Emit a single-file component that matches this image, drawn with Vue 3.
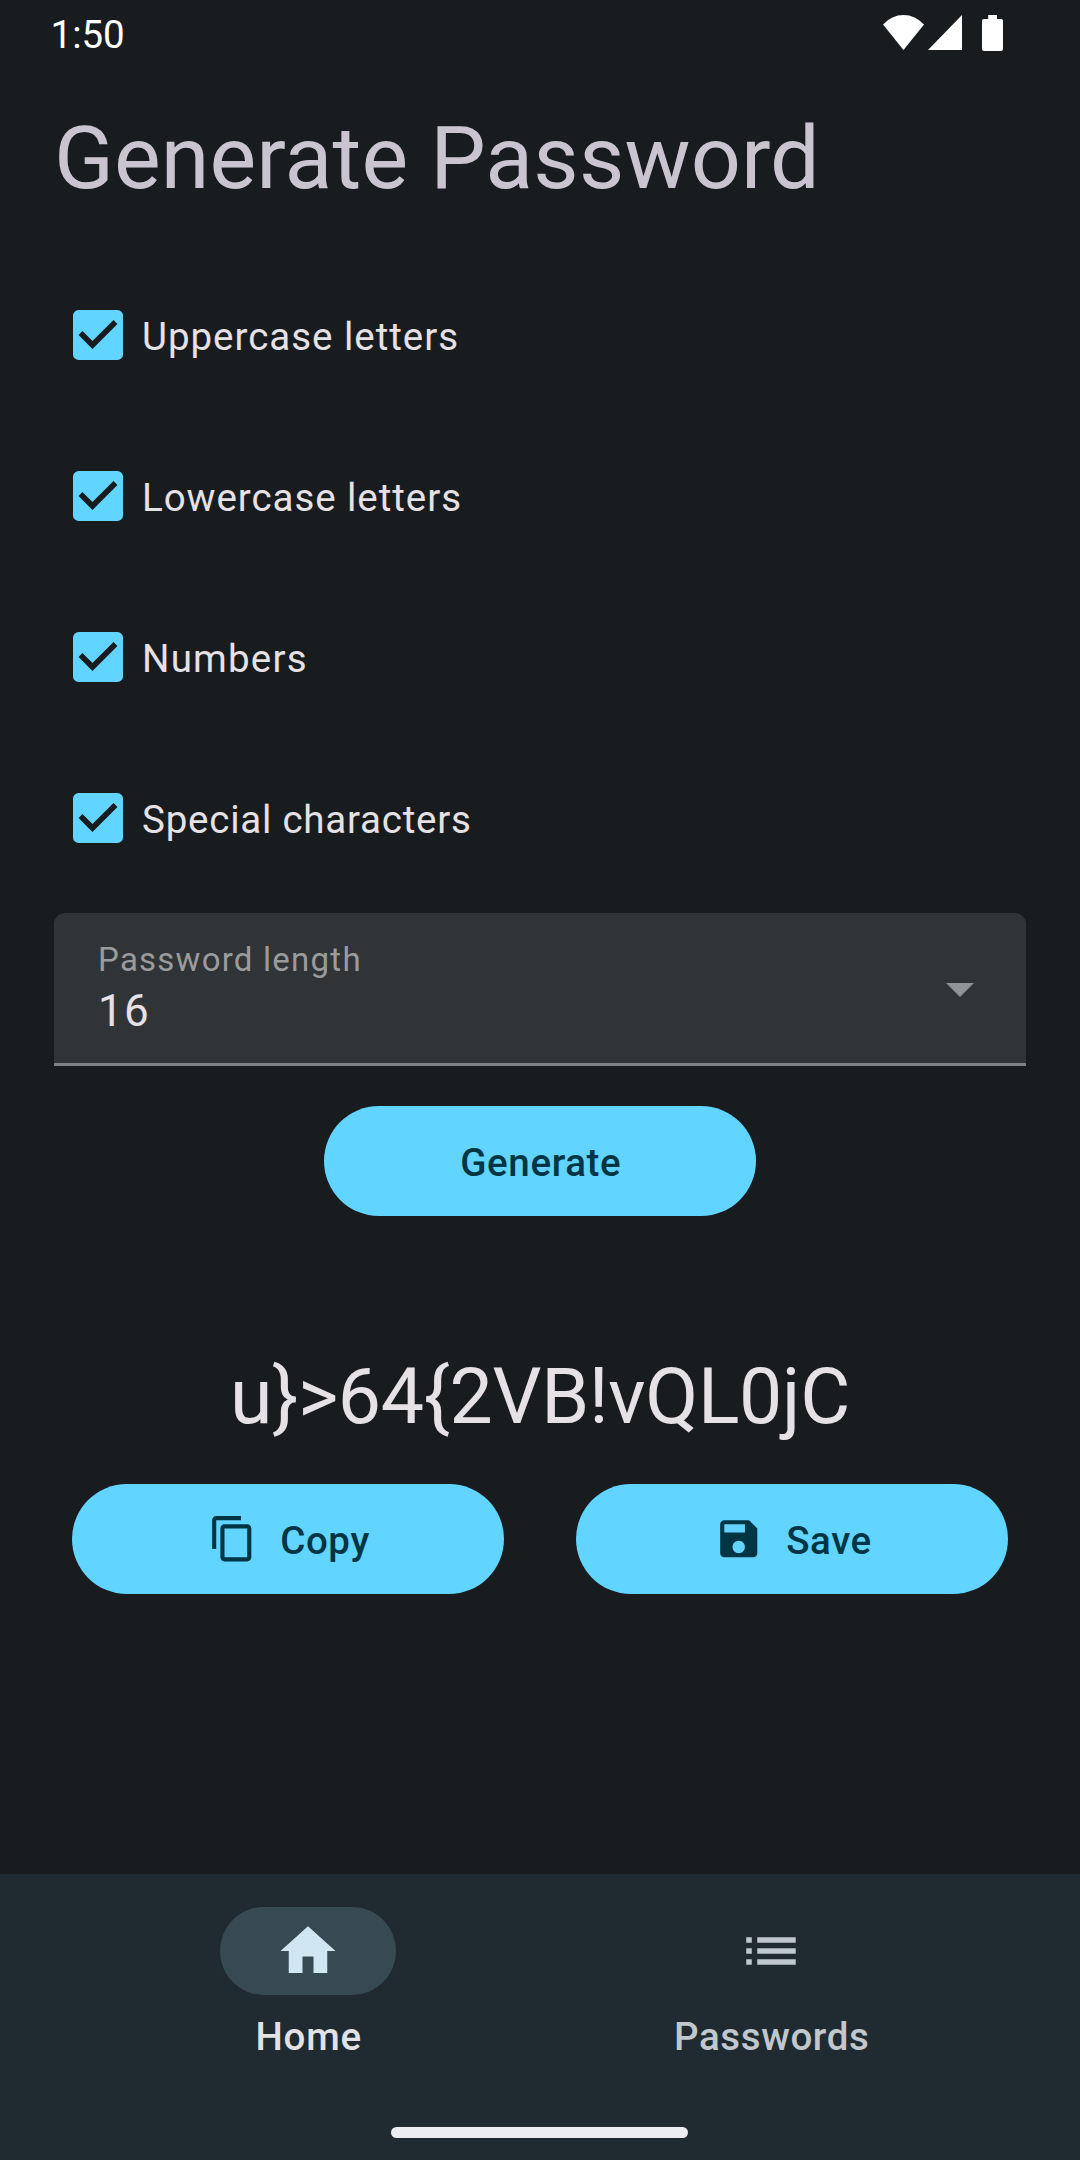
<script setup>
import { ref } from 'vue'

const options = ref([
  { label: 'Uppercase letters', checked: true, tracking: 0.97 },
  { label: 'Lowercase letters', checked: true, tracking: 0.94 },
  { label: 'Numbers', checked: true, tracking: 1.2 },
  { label: 'Special characters', checked: true, tracking: 0.77 },
])
const length = ref(16)
const password = ref('u}>64{2VB!vQL0jC')
</script>

<template>
  <div class="screen">
    <header class="status">
      <span class="time">1:50</span>
      <div class="indicators">
        <svg class="wifi" viewBox="0 0 41 35"><path d="M20.5 35 0 9.5Q8.800 0 20.500 0T41 9.500Z" /></svg>
        <svg class="signal" viewBox="0 0 34 35"><path d="M34 0V35H0Z" /></svg>
        <svg class="battery" viewBox="0 0 21 36"><path d="M6.200 0h8.800v4h4.200q1.800 0 1.800 1.800v28.200q0 2-2 2h-17q-2 0-2-2V5.800Q0 4 1.800 4h4.400z" /></svg>
      </div>
    </header>

    <main class="content">
      <h1 class="title">Generate Password</h1>

      <ul class="options">
        <li v-for="option in options" :key="option.label" class="option" @click="option.checked = !option.checked">
          <svg class="box" viewBox="0 0 18 18">
            <path
              fill-rule="evenodd"
              d="M2 0H16A2 2 0 0 1 18 2V16A2 2 0 0 1 16 18H2A2 2 0 0 1 0 16V2A2 2 0 0 1 2 0ZM7 14 16 5 14.590 3.580 7 11.170 3.410 7.590 2 9Z"
            />
          </svg>
          <span class="option-label" :style="{ letterSpacing: option.tracking + 'px' }">{{ option.label }}</span>
        </li>
      </ul>

      <div class="select">
        <div class="select-text">
          <span class="select-label">Password length</span>
          <span class="select-value">{{ length }}</span>
        </div>
        <svg class="arrow" viewBox="0 0 10 5"><path d="M0 0 5 5 10 0Z" /></svg>
      </div>

      <button class="button generate"><span class="button-text">Generate</span></button>

      <p class="password">{{ password }}</p>

      <div class="actions">
        <button class="button">
          <svg class="button-icon" viewBox="0 0 24 24">
            <path d="M16 1H4c-1.100 0-2 .900-2 2v14h2V3h12V1zm3 4H8c-1.100 0-2 .900-2 2v14c0 1.100.900 2 2 2h11c1.100 0 2-.900 2-2V7c0-1.100-.900-2-2-2zm0 16H8V7h11v14z" />
          </svg>
          <span class="button-text">Copy</span>
        </button>
        <button class="button">
          <svg class="button-icon" viewBox="0 0 24 24">
            <path d="M17 3H5c-1.110 0-2 .900-2 2v14c0 1.100.890 2 2 2h14c1.100 0 2-.900 2-2V7l-4-4zm-5 16c-1.660 0-3-1.340-3-3s1.340-3 3-3 3 1.340 3 3-1.340 3-3 3zm3-10H5V5h10v4z" />
          </svg>
          <span class="button-text">Save</span>
        </button>
      </div>
    </main>

    <nav class="nav">
      <div class="tabs">
        <a class="tab active">
          <span class="pill">
            <svg class="tab-icon" viewBox="0 0 24 24"><path d="M10 20v-6h4v6h5v-8h3L12 3 2 12h3v8z" /></svg>
          </span>
          <span class="tab-label">Home</span>
        </a>
        <a class="tab">
          <span class="pill">
            <svg class="tab-icon" viewBox="0 0 24 24">
              <path d="M3 13h2v-2H3v2zm0 4h2v-2H3v2zm0-8h2V7H3v2zm4 4h14v-2H7v2zm0 4h14v-2H7v2zM7 7v2h14V7H7z" />
            </svg>
          </span>
          <span class="tab-label">Passwords</span>
        </a>
      </div>
      <div class="gesture"></div>
    </nav>
  </div>
</template>

<style>
body {
  background: #191c1e;
}
</style>

<style scoped>
.screen {
  box-sizing: border-box;
  display: flex;
  flex-direction: column;
  width: 1080px;
  height: 2160px;
  background: #191c1e;
  color: #e6e1e5;
  font-family: Roboto, sans-serif;
  font-size: 38.5px;
  overflow: hidden;
}
svg {
  display: block;
  flex: none;
  fill: currentColor;
}
.status {
  display: flex;
  justify-content: space-between;
  height: 70px;
  padding: 0 77px 0 50.5px;
  color: #fff;
}
.time {
  line-height: 70px;
}
.indicators {
  display: flex;
  align-items: flex-start;
  padding-top: 15px;
}
.wifi {
  width: 41px;
  height: 35px;
}
.signal {
  width: 34px;
  height: 35px;
  margin-left: 4px;
}
.battery {
  width: 21px;
  height: 36px;
  margin-left: 20px;
}
.content {
  display: flex;
  flex-direction: column;
  flex: 1;
  padding: 0 54px;
}
.title {
  margin: 36px 0 0;
  color: #cac4d0;
  font-size: 88px;
  font-weight: 400;
  letter-spacing: 0.12px;
  line-height: 104px;
}
.options {
  margin: 44px 0 0;
  padding: 0;
  list-style: none;
}
.option {
  display: flex;
  align-items: center;
  height: 161px;
  padding-left: 19px;
}
.box {
  width: 50px;
  height: 50px;
  color: #61d4ff;
}
.option-label {
  margin-left: 19px;
  padding-top: 4px;
}
.select {
  box-sizing: border-box;
  display: flex;
  align-items: center;
  justify-content: space-between;
  height: 153px;
  margin-top: 15px;
  padding: 0 52px 0 44px;
  border-bottom: 3px solid #7c8184;
  border-radius: 11px 11px 0 0;
  background: #313436;
}
.select-text {
  display: flex;
  flex-direction: column;
}
.select-label {
  color: #9a9b9d;
  font-size: 33px;
  letter-spacing: 1.24px;
  line-height: 46px;
}
.select-value {
  font-size: 44px;
  letter-spacing: 1.375px;
  line-height: 56px;
}
.arrow {
  width: 28px;
  height: 14px;
  margin-top: 4px;
  color: #909497;
}
.button {
  box-sizing: border-box;
  display: flex;
  align-items: center;
  justify-content: center;
  width: 432px;
  height: 110px;
  padding: 0 0 0 1.5px;
  border: 0;
  border-radius: 55px;
  background: #61d4ff;
  color: #003543;
  font: 500 38.5px Roboto, sans-serif;
  letter-spacing: 0.62px;
}
.button-text {
  padding-top: 2px;
}
.generate {
  align-self: center;
  margin-top: 40px;
}
.password {
  margin: 136px 0 0;
  font-size: 77px;
  letter-spacing: -0.32px;
  line-height: 90px;
  text-align: center;
}
.actions {
  display: flex;
  justify-content: space-between;
  margin-top: 42px;
  padding: 0 18px;
}
.button-icon {
  width: 49.5px;
  height: 49.5px;
  margin-right: 23px;
}
.nav {
  display: flex;
  flex-direction: column;
  align-items: center;
  justify-content: space-between;
  box-sizing: border-box;
  height: 286px;
  padding: 33px 1px 22px 0;
  background: #1f2b31;
}
.tabs {
  display: flex;
  width: 926px;
}
.tab {
  display: flex;
  flex: 1;
  flex-direction: column;
  align-items: center;
  color: #c0c7cd;
}
.pill {
  display: flex;
  align-items: center;
  justify-content: center;
  width: 176px;
  height: 88px;
  border-radius: 44px;
}
.active {
  color: #e2e2e5;
}
.active .pill {
  background: #374a53;
  color: #d0e6f2;
}
.tab-icon {
  width: 66px;
  height: 66px;
}
.tab-label {
  margin-top: 19px;
  padding-left: 1.5px;
  font-weight: 500;
  line-height: 46px;
  letter-spacing: 0.62px;
}
.active .tab-label {
  letter-spacing: 0.8px;
}
.gesture {
  width: 297px;
  height: 11px;
  border-radius: 5.5px;
  background: #ecedf0;
}
</style>
